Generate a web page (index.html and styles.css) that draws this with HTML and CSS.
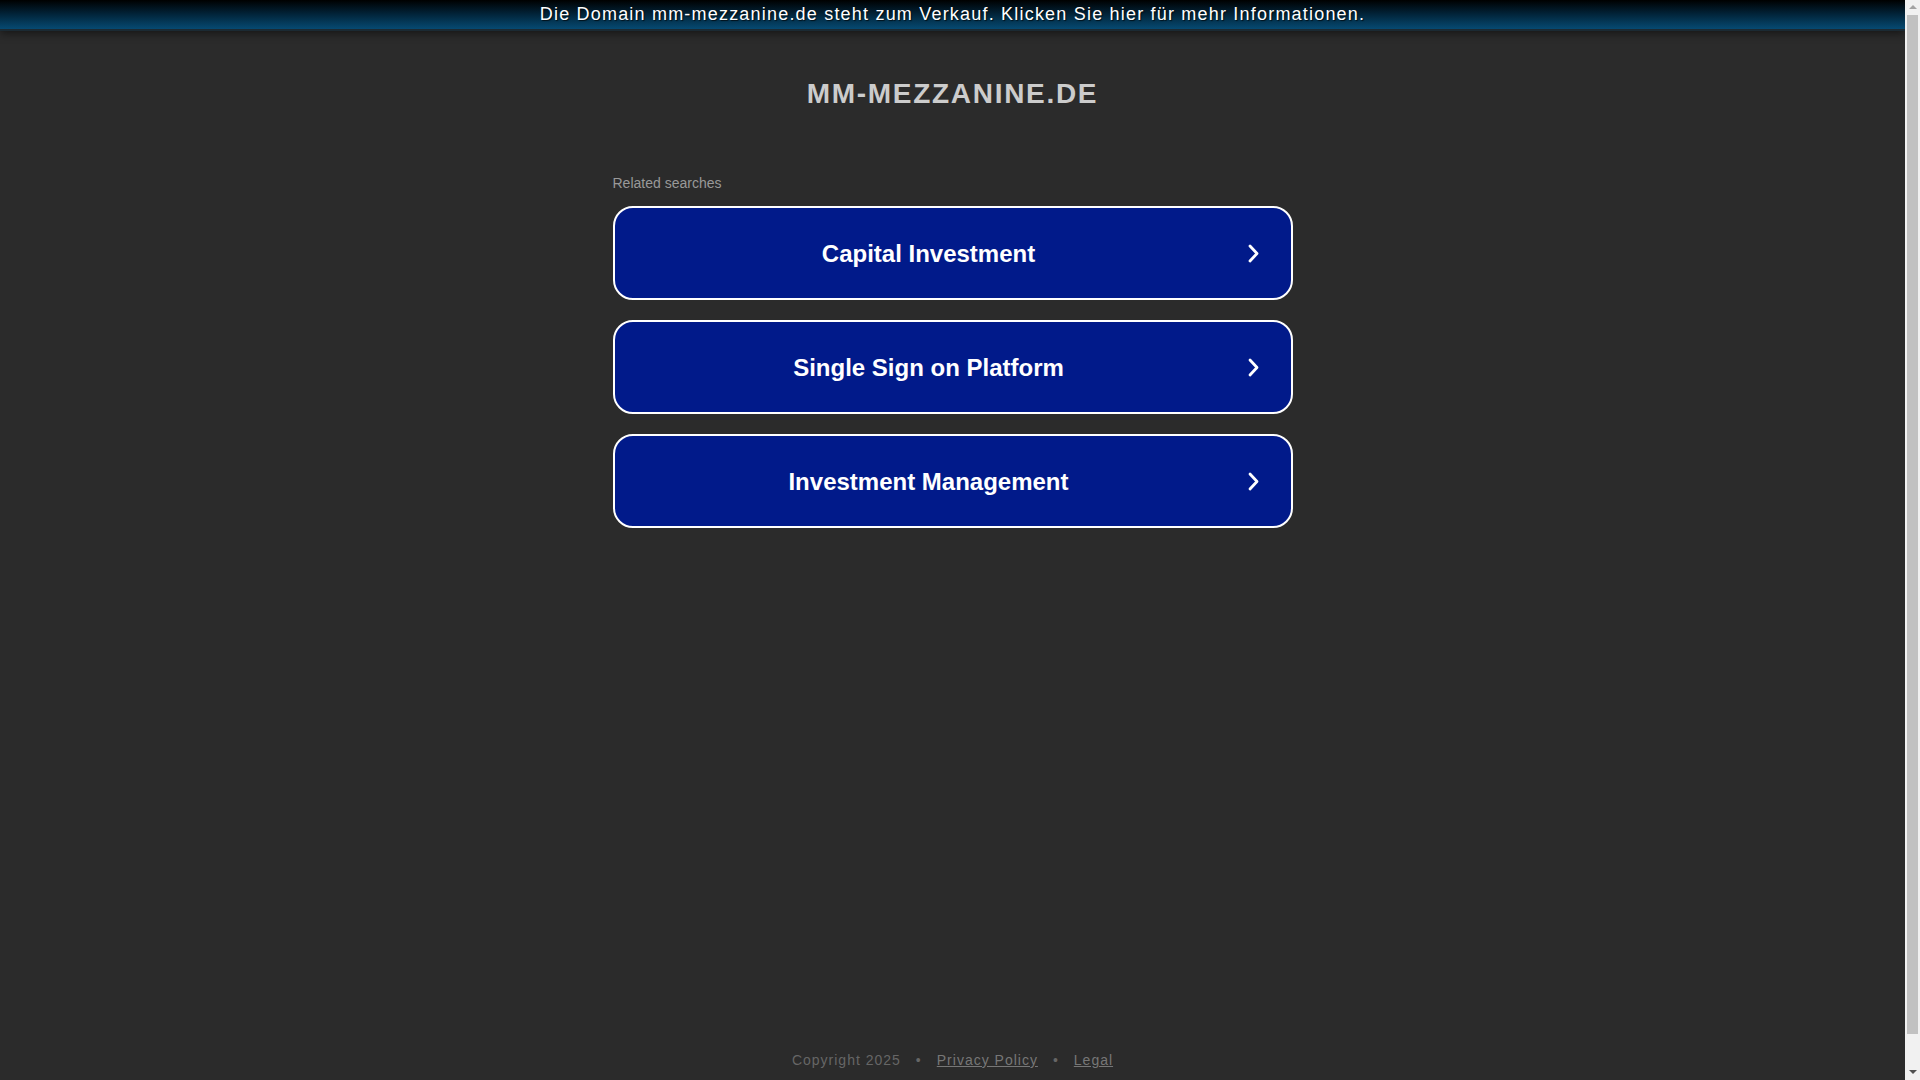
FILE: index.html
```html
<!DOCTYPE html>
<html lang="de">
<head>
<meta charset="utf-8">
<title>mm-mezzanine.de</title>
<link rel="stylesheet" href="styles.css">
</head>
<body>
<div class="page">
  <div class="banner"><a class="banner-link" href="#">Die Domain mm-mezzanine.de steht zum Verkauf. Klicken Sie hier für mehr Informationen.</a></div>
  <div class="main">
    <header class="header"><h1 class="domain">MM-MEZZANINE.DE</h1></header>
    <section class="related">
      <p class="related-title">Related searches</p>
      <ul class="links">
        <li><a class="link-btn" href="#"><span class="link-text">Capital Investment</span><svg class="chev" viewBox="0 0 11 19" width="11" height="19"><path d="M2 2 L9 9.5 L2 17" fill="none" stroke="#fff" stroke-width="2.8" stroke-linecap="round" stroke-linejoin="round"/></svg></a></li>
        <li><a class="link-btn" href="#"><span class="link-text">Single Sign on Platform</span><svg class="chev" viewBox="0 0 11 19" width="11" height="19"><path d="M2 2 L9 9.5 L2 17" fill="none" stroke="#fff" stroke-width="2.8" stroke-linecap="round" stroke-linejoin="round"/></svg></a></li>
        <li><a class="link-btn" href="#"><span class="link-text">Investment Management</span><svg class="chev" viewBox="0 0 11 19" width="11" height="19"><path d="M2 2 L9 9.5 L2 17" fill="none" stroke="#fff" stroke-width="2.8" stroke-linecap="round" stroke-linejoin="round"/></svg></a></li>
      </ul>
    </section>
  </div>
  <footer class="footer">
    <span class="copy">Copyright 2025</span><span class="sep">•</span><a class="flink" href="#">Privacy Policy</a><span class="sep">•</span><a class="flink" href="#">Legal</a>
  </footer>
</div>
<div class="scrollbar" aria-hidden="true">
  <span class="sb-arrow sb-up"></span>
  <span class="sb-thumb"></span>
  <span class="sb-arrow sb-down"></span>
</div>
</body>
</html>
```
FILE: styles.css
```css
html, body {
  margin: 0;
  padding: 0;
}
body {
  background: #2b2b2b;
  font-family: "Liberation Sans", Arial, sans-serif;
  overflow: hidden;
}
.page {
  width: calc(100% - 15px);
}
.banner {
  height: 29px;
  background: linear-gradient(to bottom, #000000 0%, #02253b 50%, #064a72 100%);
  border-bottom: 2px solid #1b2a33;
  box-shadow: 0 2px 10px rgba(0, 0, 0, 0.55);
  text-align: center;
  position: relative;
}
.banner-link {
  display: block;
  color: #ffffff;
  text-decoration: none;
  font-size: 18px;
  line-height: 28px;
  letter-spacing: 1.2px;
  text-shadow: 1px 1px 1px rgba(0, 0, 0, 0.7);
}
.main {
  min-height: 1019px;
  width: 680px;
  margin: 0 auto;
}
.header {
  padding-top: 46px;
  text-align: center;
}
.domain {
  margin: 0;
  font-size: 28px;
  line-height: 34px;
  font-weight: bold;
  letter-spacing: 1.7px;
  color: #cccccc;
}
.related {
  margin-top: 63px;
}
.related-title {
  margin: 0;
  font-size: 14px;
  line-height: 18px;
  color: #999999;
}
.links {
  list-style: none;
  margin: 14px 0 0;
  padding: 0;
  display: flex;
  flex-direction: column;
  gap: 20px;
}
.link-btn {
  display: flex;
  align-items: center;
  height: 90px;
  border: 2px solid #ffffff;
  border-radius: 20px;
  background: #011a8a;
  color: #ffffff;
  text-decoration: none;
}
.link-text {
  flex: 1;
  text-align: center;
  font-size: 24px;
  font-weight: bold;
  padding-top: 2px;
}
.chev {
  display: block;
  margin-left: 5px;
  margin-right: 32px;
}
.footer {
  text-align: center;
  font-size: 14px;
  line-height: 20px;
  letter-spacing: 1px;
  color: #666666;
  padding-bottom: 43px;
}
.sep {
  margin: 0 15px;
}
.flink {
  color: #777777;
  text-decoration: underline;
}
.scrollbar {
  position: fixed;
  top: 0;
  right: 0;
  width: 15px;
  height: 100vh;
  background: #f1f1f1;
  display: flex;
  flex-direction: column;
  align-items: center;
}
.sb-arrow {
  display: block;
  width: 0;
  height: 0;
  border-left: 4px solid transparent;
  border-right: 4px solid transparent;
}
.sb-up {
  margin: 5px 0 6px;
  border-bottom: 4px solid #a3a3a3;
}
.sb-down {
  margin: auto 0 6px;
  border-top: 4px solid #505050;
}
.sb-thumb {
  display: block;
  width: 11px;
  height: 1019px;
  background: #c1c1c1;
}
```
